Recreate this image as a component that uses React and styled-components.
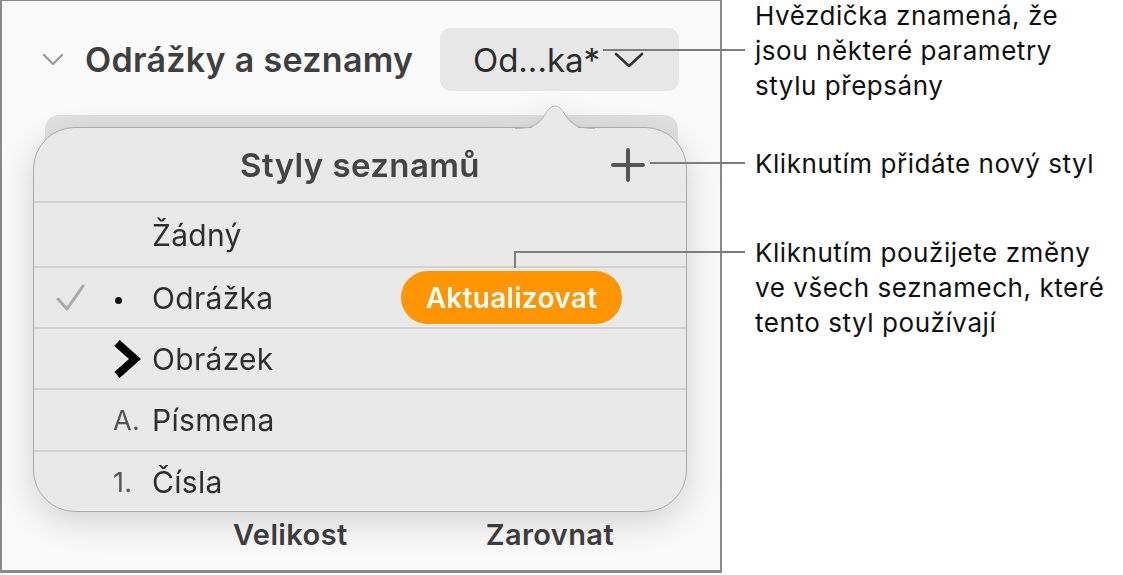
import React from 'react';
import styled, { createGlobalStyle } from 'styled-components';

const GlobalStyle = createGlobalStyle`
  body {
    margin: 0;
    background: #ffffff;
    font-family: Inter, "Noto Sans", "Liberation Sans", sans-serif;
  }
`

const Page = styled.div`
  position: relative;
  display: flex;
  width: 1123px;
  height: 575px;
  overflow: hidden;
`

const Panel = styled.div`
  box-sizing: border-box;
  width: 722px;
  height: 573px;
  display: flex;
  flex-direction: column;
  background: #fafafa;
  border: 2px solid #8a8a8a;
  border-top-width: 1px;
  border-bottom-width: 3px;
`

const SectionHeader = styled.div`
  display: flex;
  align-items: center;
  height: 63px;
  margin-top: 27px;
  padding: 0 41px 0 40px;
`

const Disclosure = styled.svg`
  width: 22px;
  height: 14px;
  margin-right: 21px;
`

const SectionTitle = styled.div`
  font-size: 34px;
  font-weight: 600;
  color: #3f3f3f;
  letter-spacing: 0.3px;
`

const StyleButton = styled.div`
  margin-left: auto;
  width: 239px;
  height: 63px;
  box-sizing: border-box;
  display: flex;
  align-items: center;
  justify-content: center;
  gap: 14px;
  padding-right: 2px;
  border-radius: 11px;
  background: #e7e7e7;
  font-size: 33px;
  color: #2b2b2b;
`

const PopoverArea = styled.div`
  position: relative;
  margin: 36px 0 0 31px;
  width: 654px;
`

const GhostStrip = styled.div`
  position: absolute;
  top: -12px;
  left: 12px;
  right: 9px;
  height: 60px;
  border-radius: 14px;
  background: #e2e2e2;
`

const Popover = styled.div`
  position: relative;
  filter: drop-shadow(0 10px 18px rgba(0, 0, 0, 0.16));
`

const PopoverBody = styled.div`
  box-sizing: border-box;
  height: 385px;
  border-radius: 42px;
  border: 1px solid #aaaaaa;
  background: #e9e9e9;
  overflow: hidden;
`

const Arrow = styled.svg`
  position: absolute;
  top: -30px;
  left: 482px;
  width: 80px;
  height: 32px;
  overflow: visible;
`

const PopHeader = styled.div`
  height: 73px;
  display: grid;
  grid-template-columns: 1fr auto 1fr;
  align-items: center;
  font-size: 33px;
  font-weight: 600;
  color: #444;
  letter-spacing: 0.4px;
`

const PlusIcon = styled.svg`
  justify-self: end;
  margin-right: 41px;
  width: 34px;
  height: 34px;
`

const Row = styled.div`
  display: flex;
  align-items: center;
  height: ${({ $h }) => $h}px;
  border-top: 2px solid #d2d2d2;
  padding: 0 64px 0 22px;
  font-size: 30px;
  color: #2e2e2e;
  letter-spacing: 0.3px;
`

const CheckCell = styled.div`
  width: 57px;
  display: flex;
  align-items: center;
`

const MarkerCell = styled.div`
  width: 39px;
  display: flex;
  align-items: center;
  font-size: 27px;
  color: #555;
`

const Dot = styled.span`
  width: 7px;
  height: 7px;
  margin: 6px 0 0 2px;
  border-radius: 50%;
  background: #111;
`

const UpdateButton = styled.div`
  margin-left: auto;
  width: 221px;
  height: 53px;
  border-radius: 27px;
  background: #ff9500;
  color: #fff;
  font-size: 28px;
  font-weight: 600;
  letter-spacing: 0.3px;
  display: flex;
  align-items: center;
  justify-content: center;
`

const Footer = styled.div`
  display: flex;
  margin-top: 8px;
  padding-left: 231px;
  gap: 138px;
  font-size: 29px;
  font-weight: 600;
  color: #3f3f3f;
  line-height: 30px;
  letter-spacing: 0.4px;
`

const Notes = styled.div`
  display: flex;
  flex-direction: column;
  padding-left: 33px;
  font-size: 26px;
  letter-spacing: 0.55px;
  line-height: 35px;
  color: #111;
  white-space: nowrap;
`

const Note = styled.div`
  margin-top: ${({ $gap }) => $gap}px;
`

const HLine = styled.div`
  position: absolute;
  left: ${({ $x }) => $x}px;
  top: ${({ $y }) => $y}px;
  width: ${({ $w }) => $w}px;
  height: 2px;
  background: #7d7d7d;
`

const VLine = styled.div`
  position: absolute;
  left: ${({ $x }) => $x}px;
  top: ${({ $y }) => $y}px;
  width: 2px;
  height: ${({ $h }) => $h}px;
  background: #7d7d7d;
`

const rows = [
  { label: 'Žádný', h: 63 },
  { label: 'Odrážka', h: 59, checked: true, marker: 'dot', update: true },
  { label: 'Obrázek', h: 59, marker: 'image' },
  { label: 'Písmena', h: 60, marker: 'A.' },
  { label: 'Čísla', h: 60, marker: '1.' },
];

const Marker = ({ type }) => {
  if (!type) return null;
  if (type === 'dot') return <Dot />;
  if (type === 'image')
    return (
      <svg width="28" height="42" viewBox="0 0 28 42">
        <path d="M4 5 L22 21 L4 37" fill="none" stroke="#000" strokeWidth="8" strokeLinejoin="miter" />
      </svg>
    );
  return <span>{type}</span>;
};

export default function App() {
  return (
    <Page>
      <GlobalStyle />
      <Panel>
        <SectionHeader>
          <Disclosure viewBox="0 0 22 14">
            <path d="M2 2 L11 11 L20 2" fill="none" stroke="#9a9a9a" strokeWidth="2.4" strokeLinecap="round" strokeLinejoin="round" />
          </Disclosure>
          <SectionTitle>Odrážky a seznamy</SectionTitle>
          <StyleButton>
            <span>Od...ka*</span>
            <svg width="30" height="16" viewBox="0 0 30 16">
              <path d="M2 2 L15 14 L28 2" fill="none" stroke="#333" strokeWidth="2.6" strokeLinecap="round" strokeLinejoin="round" />
            </svg>
          </StyleButton>
        </SectionHeader>

        <PopoverArea>
          <GhostStrip />
          <Popover>
            <PopoverBody>
              <PopHeader>
                <span />
                <span>Styly seznamů</span>
                <PlusIcon viewBox="0 0 34 34">
                  <path d="M17 2 V32 M2 17 H32" stroke="#555" strokeWidth="4" strokeLinecap="round" />
                </PlusIcon>
              </PopHeader>
              {rows.map((r) => (
                <Row key={r.label} $h={r.h}>
                  <CheckCell>
                    {r.checked && (
                      <svg width="30" height="28" viewBox="0 0 30 28">
                        <path d="M2 15 L11 25 L27 2" fill="none" stroke="#a9a9a9" strokeWidth="3" strokeLinecap="round" strokeLinejoin="round" />
                      </svg>
                    )}
                  </CheckCell>
                  <MarkerCell>
                    <Marker type={r.marker} />
                  </MarkerCell>
                  <span>{r.label}</span>
                  {r.update && <UpdateButton>Aktualizovat</UpdateButton>}
                </Row>
              ))}
            </PopoverBody>
            <Arrow viewBox="0 0 80 32">
              <path d="M0 33 C14 33 22 31 30 19 Q40 2 50 19 C58 31 66 33 80 33 Z" fill="#e9e9e9" />
              <path d="M0 31.5 C14 31.5 22 29.5 30 17.5 Q40 0.5 50 17.5 C58 29.5 66 31.5 80 31.5" fill="none" stroke="#b5b5b5" strokeWidth="1" />
            </Arrow>
          </Popover>
        </PopoverArea>

        <Footer>
          <span>Velikost</span>
          <span>Zarovnat</span>
        </Footer>
      </Panel>

      <Notes>
        <Note $gap={-2}>
          Hvězdička znamená, že<br />
          jsou některé parametry<br />
          stylu přepsány
        </Note>
        <Note $gap={43}>Kliknutím přidáte nový styl</Note>
        <Note $gap={54}>
          Kliknutím použijete změny<br />
          ve všech seznamech, které<br />
          tento styl používají
        </Note>
      </Notes>

      <HLine $x={603} $y={49} $w={142} />
      <HLine $x={650} $y={162} $w={95} />
      <HLine $x={514} $y={251} $w={231} />
      <VLine $x={514} $y={251} $h={17} />
    </Page>
  );
}
